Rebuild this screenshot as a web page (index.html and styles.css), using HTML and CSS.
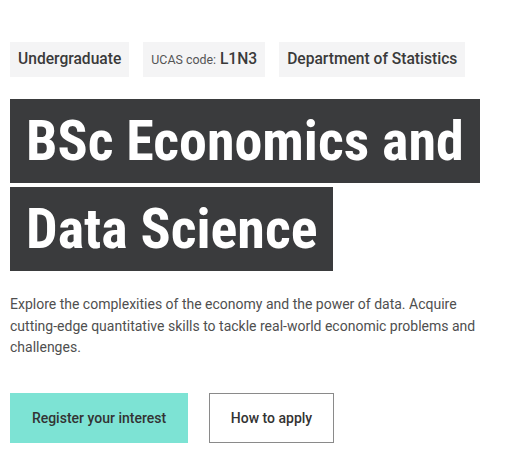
FILE: index.html
```html
<!DOCTYPE html>
<html lang="en">
<head>
<meta charset="utf-8">
<title>BSc Economics and Data Science</title>
<link rel="stylesheet" href="styles.css">
</head>
<body>
<main class="hero">
  <ul class="tags">
    <li class="tag">Undergraduate</li>
    <li class="tag"><span class="tag-label">UCAS code:</span> L1N3</li>
    <li class="tag">Department of Statistics</li>
  </ul>
  <h1 class="title"><span class="title-text">BSc Economics and Data Science</span></h1>
  <p class="intro">Explore the complexities of the economy and the power of data. Acquire cutting-edge quantitative skills to tackle real-world economic problems and challenges.</p>
  <div class="actions">
    <a class="btn btn-primary" href="#">Register your interest</a>
    <a class="btn btn-outline" href="#">How to apply</a>
  </div>
</main>
</body>
</html>
```
FILE: styles.css
```css
* { box-sizing: border-box; }
html, body { margin: 0; padding: 0; background: #fff; }
body {
  font-family: Roboto, "Noto Sans", "Liberation Sans", sans-serif;
  color: #333;
}
.hero {
  padding: 42px 10px 0 10px;
  width: 516px;
}
.tags {
  list-style: none;
  margin: 0;
  padding: 0;
  display: flex;
  gap: 14px;
}
.tag {
  background: #f4f4f5;
  color: #3a3a3a;
  font-size: 15.6px;
  font-weight: 500;
  height: 35px;
  line-height: 35px;
  padding: 0 8px;
  white-space: nowrap;
}
.tag-label {
  font-size: 12.4px;
  font-weight: 400;
  color: #555;
}
.title {
  margin: 20px 0 0 0;
  font-family: "Roboto Condensed", Roboto, sans-serif;
  font-stretch: condensed;
  font-size: 56px;
  font-weight: 700;
  line-height: 88px;
  width: 480px;
}
.title-text {
  background: #3a3b3d;
  color: #fff;
  padding: 9px 16px;
  -webkit-box-decoration-break: clone;
  box-decoration-break: clone;
}
.intro {
  margin: 21px 0 0 0;
  font-size: 14px;
  line-height: 21.5px;
  color: #4f4f4f;
  max-width: 470px;
}
.actions {
  display: flex;
  gap: 21px;
  margin-top: 34px;
}
.btn {
  display: flex;
  align-items: center;
  justify-content: center;
  height: 50px;
  font-size: 14px;
  font-weight: 500;
  color: #333;
  text-decoration: none;
}
.btn-primary {
  background: #7de3d4;
  width: 178px;
}
.btn-outline {
  border: 1px solid #8a8a8a;
  width: 125px;
  background: #fff;
}
```
